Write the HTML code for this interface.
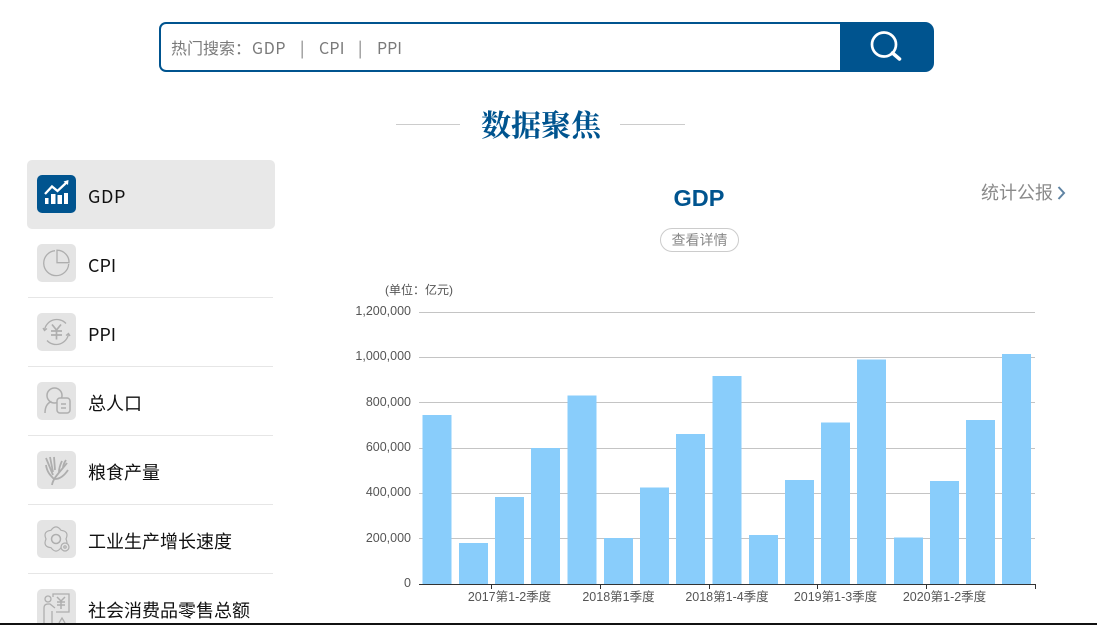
<!DOCTYPE html>
<html lang="zh">
<head>
<meta charset="utf-8">
<title>数据聚焦</title>
<style>
html,body{margin:0;padding:0;background:#fff;}
body{width:1097px;height:625px;position:relative;overflow:hidden;font-family:"Liberation Sans","Noto Sans CJK SC",sans-serif;}
.a{position:absolute;white-space:nowrap;}
.cjk{font-family:"Noto Sans CJK SC","Liberation Sans",sans-serif;font-weight:400;}
.s{font-size:16px;line-height:23px;color:#7a7a7a;top:36px;}
.ico{position:absolute;left:37px;width:39px;height:38px;border-radius:5px;background:#e4e4e4;}
.ico svg{position:absolute;left:0;top:0;}
.lb{position:absolute;left:88px;font-family:"Noto Sans CJK SC","Liberation Sans",sans-serif;font-weight:400;font-size:18px;line-height:26px;color:#111;white-space:nowrap;}
.sep{position:absolute;left:28px;width:245px;height:1px;background:#e6e6e6;}
</style>
</head>
<body>
<!-- search -->
<div class="a" style="left:159px;top:22px;width:690px;height:46px;border:2px solid #00548f;border-radius:7px 0 0 7px;border-right:0;"></div>
<div class="a" style="left:840px;top:22px;width:94px;height:50px;background:#00548f;border-radius:0 9px 9px 0;"></div>
<svg class="a" style="left:868px;top:29px;" width="36" height="36" viewBox="0 0 36 36"><circle cx="16" cy="15.500" r="12" fill="none" stroke="#fff" stroke-width="2.700"/><path d="M24.500 24l7 6" stroke="#fff" stroke-width="3.600" stroke-linecap="round" fill="none"/></svg>
<div class="a cjk s" style="left:171px;">热门搜索：</div>
<div class="a cjk s" style="left:252px;letter-spacing:.7px;">GDP</div>
<div class="a cjk s" style="left:300px;">|</div>
<div class="a cjk s" style="left:319px;letter-spacing:.2px;">CPI</div>
<div class="a cjk s" style="left:358px;">|</div>
<div class="a cjk s" style="left:377px;">PPI</div>

<!-- heading -->
<div class="a" style="left:396px;top:124px;width:64px;height:1px;background:#ccc;"></div>
<div class="a" style="left:620px;top:124px;width:65px;height:1px;background:#ccc;"></div>
<div class="a" style="left:481px;top:103px;font-family:'Noto Serif CJK SC',serif;font-weight:700;font-size:30px;line-height:40px;color:#00548f;">数据聚焦</div>

<!-- sidebar -->
<div class="a" style="left:27px;top:160px;width:248px;height:69px;background:#e8e8e8;border-radius:5px;"></div>

<div class="ico" style="top:175px;background:#00548f;">
<svg width="39" height="38" viewBox="0 0 39 38"><g fill="#fff"><rect x="8" y="23" width="3.500" height="6"/><rect x="14" y="19" width="4.500" height="10"/><rect x="20.500" y="20" width="4.500" height="9"/><rect x="27" y="18" width="4" height="11"/></g><path d="M8 19l7-7.500 5.500 4.500 9-8.500" fill="none" stroke="#fff" stroke-width="2.300"/><path d="M26.500 6.500l5-1.500-.5 5z" fill="#fff"/></svg>
</div>
<div class="lb" style="top:183px;letter-spacing:.6px;">GDP</div>

<div class="ico" style="top:244px;">
<svg width="39" height="38" viewBox="0 0 39 38" fill="none" stroke="#aeaeae" stroke-width="1.300"><path d="M18 6.700a12.500 12.500 0 1 0 13.700 13.300"/><path d="M20 6.200a12 12 0 0 1 12 12.500H20z"/></svg>
</div>
<div class="lb" style="top:252px;">CPI</div>
<div class="sep" style="top:297px;"></div>

<div class="ico" style="top:313px;">
<svg width="39" height="38" viewBox="0 0 39 38" fill="none" stroke="#aeaeae" stroke-width="1.300"><path d="M7.500 17a12.500 12.500 0 0 1 21.500-6.500"/><path d="M31.500 21a12.500 12.500 0 0 1-21.500 6.500"/><path d="M6 15l1.500 2.500 2.500-2M33 23l-1.500-2.500-2.500 2"/><path d="M15 11.500l4.500 5.500 4.500-5.500M14 18h11M14 22h11M19.500 17v9.500" stroke-width="1.700"/></svg>
</div>
<div class="lb" style="top:321px;">PPI</div>
<div class="sep" style="top:366px;"></div>

<div class="ico" style="top:382px;">
<svg width="39" height="38" viewBox="0 0 39 38" fill="none" stroke="#aeaeae" stroke-width="1.500"><circle cx="17.500" cy="13.500" r="7.500"/><path d="M8 31c0-6 2.500-10 6.500-11.500"/><rect x="20" y="16" width="13" height="15" rx="3" fill="#e4e4e4"/><path d="M24 22h5M24 26h5"/></svg>
</div>
<div class="lb" style="top:390px;">总人口</div>
<div class="sep" style="top:435px;"></div>

<div class="ico" style="top:451px;">
<svg width="39" height="38" viewBox="0 0 39 38" fill="none" stroke="#aeaeae" stroke-width="1.800"><path d="M15 34c1-7 8-13 15-22"/><path d="M16 24L9 7M16 21L13 6M18 19L17 6M9 14c1 7 4 10 8 14M22 21c0-4 1-7 3-11M26 17c0-3 1-5 3-8M18 28c5 0 9-3 13-9"/></svg>
</div>
<div class="lb" style="top:459px;">粮食产量</div>
<div class="sep" style="top:504px;"></div>

<div class="ico" style="top:520px;">
<svg width="39" height="38" viewBox="0 0 39 38" fill="none" stroke="#aeaeae" stroke-width="1.200"><path d="M14 10.300Q19 3.500 24 10.300Q32.400 11.250 29 19Q32.400 26.750 24 27.700Q19 34.500 14 27.700Q5.600 26.750 9 19Q5.600 11.250 14 10.300Z"/><circle cx="19" cy="19" r="4.500" stroke-width="1.500"/><circle cx="28" cy="27" r="4" fill="#e4e4e4"/><circle cx="28" cy="27" r="1.200"/></svg>
</div>
<div class="lb" style="top:528px;">工业生产增长速度</div>
<div class="sep" style="top:573px;"></div>

<div class="ico" style="top:589px;height:34px;border-radius:5px 5px 0 0;">
<svg width="39" height="34" viewBox="0 0 39 34" fill="none" stroke="#aeaeae" stroke-width="1.300"><circle cx="11" cy="10" r="3"/><path d="M7 34V19q0-4 4-4h2l5 4M15 34V22"/><path d="M16 8V5h16v18H19"/><path d="M20 8l4 4 4-4M20 13h8M20 16h8M24 12v8" stroke-width="1.500"/><path d="M22 34l3-5 3 5"/></svg>
</div>
<div class="lb" style="top:597px;">社会消费品零售总额</div>

<!-- right content -->
<div class="a" style="left:673.500px;top:184px;font-family:'Liberation Sans',sans-serif;font-weight:700;font-size:23.500px;line-height:28px;color:#00548f;">GDP</div>
<div class="a cjk" style="left:981px;top:179px;font-size:18px;line-height:26px;color:#8a8a8a;">统计公报</div>
<svg class="a" style="left:1055px;top:184px;" width="12" height="18" viewBox="0 0 12 18"><path d="M3.500 3l5.500 6-5.500 6" fill="none" stroke="#5f83a3" stroke-width="2"/></svg>
<div class="a cjk" style="left:660px;top:228px;width:77px;height:22px;border:1px solid #ccc;border-radius:12px;text-align:center;font-size:14px;line-height:22px;color:#888;">查看详情</div>

<!-- chart -->
<svg class="a" style="left:0;top:0;" width="1097" height="625" viewBox="0 0 1097 625">
<g stroke="#c4c4c4" stroke-width="1" shape-rendering="crispEdges">
<line x1="419" x2="1035" y1="312.500" y2="312.500"/>
<line x1="419" x2="1035" y1="357.500" y2="357.500"/>
<line x1="419" x2="1035" y1="402.500" y2="402.500"/>
<line x1="419" x2="1035" y1="448.500" y2="448.500"/>
<line x1="419" x2="1035" y1="493.500" y2="493.500"/>
<line x1="419" x2="1035" y1="538.500" y2="538.500"/>
</g>
<g fill="#89cdfb">
<rect x="422.500" y="415" width="29" height="169"/>
<rect x="459" y="543" width="29" height="41"/>
<rect x="495" y="497" width="29" height="87"/>
<rect x="531" y="448" width="29" height="136"/>
<rect x="567.500" y="395.500" width="29" height="188.500"/>
<rect x="604" y="538" width="29" height="46"/>
<rect x="640" y="487.500" width="29" height="96.500"/>
<rect x="676" y="434" width="29" height="150"/>
<rect x="712.500" y="376" width="29" height="208"/>
<rect x="749" y="535" width="29" height="49"/>
<rect x="785" y="480" width="29" height="104"/>
<rect x="821" y="422.500" width="29" height="161.500"/>
<rect x="857" y="359.500" width="29" height="224.500"/>
<rect x="894" y="537.500" width="29" height="46.500"/>
<rect x="930" y="481" width="29" height="103"/>
<rect x="966" y="420" width="29" height="164"/>
<rect x="1002" y="354" width="29" height="230"/>
</g>
<g stroke="#333" stroke-width="1" shape-rendering="crispEdges">
<line x1="419" x2="1036" y1="584.500" y2="584.500"/>
<line x1="491.500" x2="491.500" y1="584" y2="589"/>
<line x1="600.500" x2="600.500" y1="584" y2="589"/>
<line x1="709.500" x2="709.500" y1="584" y2="589"/>
<line x1="817.500" x2="817.500" y1="584" y2="589"/>
<line x1="926.500" x2="926.500" y1="584" y2="589"/>
<line x1="1035.500" x2="1035.500" y1="584" y2="589"/>
</g>
<g font-family="'Liberation Sans',sans-serif" font-size="12.500" fill="#555" text-anchor="end">
<text x="411" y="315">1,200,000</text>
<text x="411" y="360">1,000,000</text>
<text x="411" y="406">800,000</text>
<text x="411" y="451">600,000</text>
<text x="411" y="496">400,000</text>
<text x="411" y="542">200,000</text>
<text x="411" y="587">0</text>
</g>
<g font-family="'Liberation Sans','Noto Sans CJK SC',sans-serif" font-size="12.500" fill="#555" text-anchor="middle">
<text x="509.500" y="601">2017第1-2季度</text>
<text x="618.500" y="601">2018第1季度</text>
<text x="727" y="601">2018第1-4季度</text>
<text x="835.500" y="601">2019第1-3季度</text>
<text x="944.500" y="601">2020第1-2季度</text>
</g>
<text x="385" y="294" font-family="'Liberation Sans','Noto Sans CJK SC',sans-serif" font-size="12" fill="#555">(单位：亿元)</text>
</svg>

<!-- bottom bar -->
<div class="a" style="left:0;top:623px;width:1097px;height:2px;background:#111;"></div>
</body>
</html>
